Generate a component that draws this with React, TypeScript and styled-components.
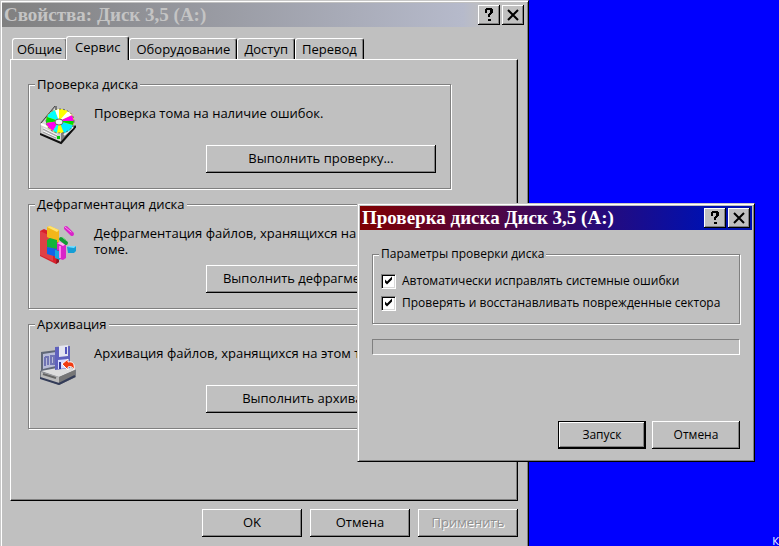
import React from 'react';
import styled, { createGlobalStyle, css } from 'styled-components';

const GlobalStyle = createGlobalStyle`
  * { box-sizing: border-box; }
  body { margin: 0; overflow: hidden; }
`;

const face = '#c0c0c0';
const raised = css`
  box-shadow: inset -1px -1px 0 #000, inset 1px 1px 0 #fff, inset -2px -2px 0 #808080;
`;

const Desktop = styled.main`
  position: relative;
  height: 100vh;
  overflow: hidden;
  background: #0000ff;
  color: #000;
  font-family: 'Open Sans', 'Noto Sans', sans-serif;
  font-size: 13px;
  line-height: 16px;
`;

const DesktopLabel = styled.span`
  position: absolute;
  right: 0;
  bottom: 0;
  font-size: 11px;
  line-height: 10px;
  white-space: nowrap;
  color: #fff;
`;

const Window = styled.section`
  position: absolute;
  display: flex;
  flex-direction: column;
  background: ${face};
  border: 1px solid;
  border-color: #c8c8c8 #000 #000 #c8c8c8;
  box-shadow: inset 1px 1px 0 #fff, inset -1px -1px 0 #808080;
`;

const PropertiesWindow = styled(Window)`
  left: 0;
  top: 0;
  width: 100%;
  max-width: 529px;
  padding: 2px 2px 12px 1px;
`;

const CheckWindow = styled(Window)`
  left: 357px;
  top: 203px;
  width: 100%;
  max-width: 398px;
  padding: 2px 2px 12px;
  font-size: 12px;
`;

const TitleBar = styled.header<{ $active?: boolean }>`
  display: flex;
  align-items: center;
  gap: 2px;
  height: 24px;
  padding: 0 2px;
  background: ${p => p.$active
    ? 'linear-gradient(90deg, #800000, #0010b0 88%)'
    : 'linear-gradient(90deg, #808080, #b6bacb 88%, #c0c0c0 92%)'};
  color: ${p => (p.$active ? '#fff' : '#c4c4c4')};
`;

const Title = styled.h1`
  flex: 1;
  margin: 0;
  font: bold 19px/24px 'Liberation Serif', serif;
  white-space: nowrap;
`;

const CaptionButton = styled.button`
  display: grid;
  place-items: center;
  width: 22px;
  height: 20px;
  padding: 0;
  border: 0;
  background: ${face};
  ${raised}
`;

const Tabs = styled.nav`
  display: flex;
  align-items: flex-end;
  height: 32px;
  padding-left: 10px;
`;

const Tab = styled.button<{ $selected?: boolean }>`
  position: relative;
  height: ${p => (p.$selected ? '24px' : '21px')};
  margin: ${p => (p.$selected ? '0 0 -1px -1px' : '0')};
  padding: ${p => (p.$selected ? '0 8px 3px' : '0 6px')};
  z-index: ${p => (p.$selected ? 1 : 0)};
  border: 1px solid #fff;
  border-bottom: 0;
  border-right-color: #000;
  border-radius: 3px 3px 0 0;
  box-shadow: inset -1px 0 0 #808080;
  background: ${face};
  font: inherit;
  color: inherit;
  &:first-child { padding: 0 4px; }
`;

const Page = styled.div`
  display: flex;
  flex-direction: column;
  gap: 7px;
  margin: 0 8px;
  padding: 16px 66px 71px 17px;
  border: 1px solid;
  border-color: #fff #000 #000 #fff;
  box-shadow: inset -1px -1px 0 #808080;
`;

const Group = styled.fieldset`
  min-width: 0;
  margin: 0;
  padding: 0;
  border: 1px solid #808080;
  box-shadow: 1px 1px 0 #fff, inset 1px 1px 0 #fff;
`;

const Legend = styled.legend`
  margin-left: 6px;
  padding: 0 2px;
  background: ${face};
`;

const Service = styled.div`
  display: grid;
  grid-template-columns: 36px 1fr;
  column-gap: 18px;
  min-height: 96px;
  padding: 13px 14px 15px 11px;
`;

const ServiceBody = styled.div`
  display: flex;
  flex-direction: column;
  justify-content: space-between;
`;

const Description = styled.p`
  margin: 0;
  max-width: 300px;
`;

const PushButton = styled.button<{ $default?: boolean }>`
  height: 28px;
  padding: 0;
  border: 0;
  background: ${face};
  font: inherit;
  color: inherit;
  white-space: nowrap;
  ${raised}
  ${p => p.$default && css`
    box-shadow: inset 0 0 0 1px #000, inset -2px -2px 0 #000, inset 2px 2px 0 #fff, inset -3px -3px 0 #808080;
  `}
  &:disabled {
    color: #909090;
    text-shadow: 1px 1px 0 #fff;
  }
`;

const ServiceButton = styled(PushButton)`
  align-self: flex-end;
  width: 230px;
  padding-bottom: 2px;
`;

const Footer = styled.footer<{ $compact?: boolean }>`
  display: flex;
  justify-content: flex-end;
  gap: ${p => (p.$compact ? '6px' : '8px')};
  padding: ${p => (p.$compact ? '66px 12px 0' : '8px 8px 0')};
  ${PushButton} {
    width: ${p => (p.$compact ? '88px' : '100px')};
    padding-bottom: ${p => (p.$compact ? '0' : '2px')};
  }
`;

const CheckBody = styled.form`
  display: flex;
  flex-direction: column;
  gap: 15px;
  padding: 16px 12px 0;
`;

const Options = styled.div`
  display: flex;
  flex-direction: column;
  gap: 6px;
  padding: 11px 8px 12px;
`;

const Option = styled.label`
  display: flex;
  align-items: center;
  gap: 6px;
  white-space: nowrap;
`;

const Checkbox = styled.input`
  appearance: none;
  flex: none;
  width: 15px;
  height: 15px;
  margin: 0;
  border: 1px solid;
  border-color: #808080 #fff #fff #808080;
  box-shadow: inset 1px 1px 0 #000, inset -1px -1px 0 #d8d8d8;
  background: #fff;
  &:checked::before {
    content: '';
    display: block;
    width: 13px;
    height: 13px;
    background: #000;
    clip-path: polygon(3px 5px, 5px 7px, 10px 2px, 10px 5px, 5px 10px, 3px 8px);
  }
`;

const Progress = styled.div`
  height: 16px;
  border: 1px solid;
  border-color: #808080 #fff #fff #808080;
`;

const Caption = ({ children, active }: { children: string; active?: boolean }) => (
  <TitleBar $active={active}>
    <Title>{children}</Title>
    <CaptionButton type="button" aria-label="Справка">
      <svg width="12" height="14" viewBox="0 0 12 14" shapeRendering="crispEdges">
        <path d="M2 1h1V0h6v1h1v4H9v1H8v1H7v2H5V6h1V5h1V2H4v3H2zM5 11h3v2H5z" />
      </svg>
    </CaptionButton>
    <CaptionButton type="button" aria-label="Закрыть">
      <svg width="12" height="12" viewBox="0 0 12 12">
        <path d="M1 1l10 10M11 1L1 11" stroke="#000" strokeWidth="2" />
      </svg>
    </CaptionButton>
  </TitleBar>
);

const DiscIcon = () => (
  <svg width="36" height="40" viewBox="0 0 36 40" aria-hidden="true">
    <path d="M0 18L15 1h2v14l19 7-14 17-22-10z" fill="#a8a8a8" />
    <path d="M2 18L15 3v12L6 24z" fill="#dcdcdc" />
    <path d="M1 18L15 1M16 1v8" fill="none" stroke="#444" />
    <path d="M1 18l20 9v11L1 29z" fill="#d2d2d2" />
    <path d="M1 19l20 9" stroke="#fff" strokeWidth="2" />
    <path d="M21 28l14-8v4L21 38z" fill="#808080" />
    <path d="M3 23l14 7M3 26l13 6" stroke="#fff" />
    <path d="M3 24l14 7M3 27l13 6" stroke="#999" />
    <path d="M0 29l21 9 15-17" fill="none" stroke="#111" strokeWidth="2" />
    <path d="M24 30l9-8" stroke="#eee" strokeWidth="2" />
    <rect x="17" y="31" width="3" height="3" fill="#0c0" />
    <ellipse cx="20" cy="16" rx="14" ry="12" fill="#ff0" />
    <path d="M19 16L7 12c2-4 5-6 8-7z" fill="#0ff" />
    <path d="M19 16L7 12c-1 2-1 4-1 6z" fill="#0d0" />
    <path d="M19 16L6 18c1 3 4 6 7 8z" fill="#f0e" />
    <path d="M19 16l-6 10 4 2z" fill="#0ff" />
    <path d="M19 16l5 12c5-1 8-4 9-8z" fill="#0ef" />
    <path d="M19 16l14 4 1-4z" fill="#0d0" />
    <path d="M19 16h15l-2-6z" fill="#f0e" />
    <path d="M19 16l13-6-4-4z" fill="#fff" />
    <path d="M19 16L15 5l4-1z" fill="#fff" />
    <ellipse cx="19" cy="17" rx="4" ry="3" fill="#eee" stroke="#666" />
    <ellipse cx="20" cy="16" rx="14" ry="12" fill="none" stroke="#666" strokeDasharray="2 2" />
  </svg>
);

const DefragIcon = () => (
  <svg width="36" height="40" viewBox="0 0 36 40" aria-hidden="true">
    <path d="M0 6l4-2 15 7v26l-3 2L0 31z" fill="#d8202b" />
    <path d="M0 6l13 6v24L0 30z" fill="#e04045" />
    <path d="M16 39l3-2V14z" fill="#8f1520" />
    <path d="M7 2l3-1 9 4v13L7 12z" fill="#f3b61a" />
    <path d="M7 2l3-1 9 4-2 2z" fill="#ffe36b" />
    <path d="M7 15l3-2 7 2v9l-10-2z" fill="#13b43a" />
    <path d="M7 22l10 2v8l-10-3z" fill="#1265e8" />
    <path d="M15 25l5 1v9l-5-2z" fill="#16a8df" />
    <path d="M17 18l3-1 6 2v14l-3 2-3-1v-8l-3-1z" fill="#d924c8" />
    <path d="M17 18l3-1 6 2-3 2z" fill="#ffb5f5" />
    <path d="M20 21v12" stroke="#ff80ec" strokeWidth="2" />
    <path d="M26 3l6 6" stroke="#d924c8" strokeWidth="4" strokeLinecap="round" />
    <path d="M25 2l6 5" stroke="#ff90f0" strokeLinecap="round" />
    <path d="M21 14l5 4" stroke="#139a36" strokeWidth="4" strokeLinecap="round" />
    <path d="M22 12l4 3" stroke="#60e070" />
    <path d="M27 22l2-1h7v5l-2 2h-6z" fill="#149ed5" />
    <path d="M27 22l2-1h7l-2 2z" fill="#73dcff" />
  </svg>
);

const BackupIcon = () => (
  <svg width="36" height="40" viewBox="0 0 36 40" aria-hidden="true">
    <path d="M0 26l10-5h20l6 4v7L19 40 0 33z" fill="#777b83" />
    <path d="M1 26l10-5h18l6 4-16 7z" fill="#ddd" />
    <path d="M1 27l18 5v7L1 33z" fill="#bbb" />
    <path d="M19 32l16-7v6l-16 8z" fill="#777" />
    <path d="M0 33l19 6 16-8" fill="none" stroke="#333c58" strokeWidth="2" />
    <path d="M3 29l13 4" stroke="#666" strokeWidth="2" />
    <path d="M1 7l16-2v18L1 26z" fill="#606878" />
    <path d="M3 9l13-2v14L3 24z" fill="#b8bcd8" />
    <path d="M5 12v9M5 12h3v8M11 11v8h3v-8z" fill="none" stroke="#7074b4" strokeWidth="2" />
    <path d="M15 2l15-1v22l-15 2z" fill="#5f61bd" />
    <path d="M19 1l9-1v11l-9 1z" fill="#e4e5f0" />
    <path d="M25 2h2v7h-2z" fill="#5557bd" />
    <path d="M18 15l10-1v9l-10 1z" fill="#d8dcff" />
    <path d="M20 17v7" stroke="#333a99" strokeWidth="2" />
    <path d="M22 19l6-5v3c5-1 7 2 6 8-1-3-3-4-6-3v3z" fill="#f13b12" stroke="#fff" />
  </svg>
);

const services = [
  { title: 'Проверка диска', text: 'Проверка тома на наличие ошибок.', action: 'Выполнить проверку...', Icon: DiscIcon },
  { title: 'Дефрагментация диска', text: 'Дефрагментация файлов, хранящихся на этом томе.', action: 'Выполнить дефрагментацию...', Icon: DefragIcon },
  { title: 'Архивация', text: 'Архивация файлов, хранящихся на этом томе.', action: 'Выполнить архивацию...', Icon: BackupIcon },
];

const tabs = ['Общие', 'Сервис', 'Оборудование', 'Доступ', 'Перевод'];
const options = ['Автоматически исправлять системные ошибки', 'Проверять и восстанавливать поврежденные сектора'];

export default function App() {
  return (
    <Desktop>
      <GlobalStyle />
      <DesktopLabel>К</DesktopLabel>
      <PropertiesWindow>
        <Caption>Свойства: Диск 3,5 (A:)</Caption>
        <Tabs role="tablist">
          {tabs.map((name, i) => (
            <Tab key={name} type="button" role="tab" aria-selected={i === 1} $selected={i === 1}>{name}</Tab>
          ))}
        </Tabs>
        <Page role="tabpanel">
          {services.map(({ title, text, action, Icon }) => (
            <Group key={title}>
              <Legend>{title}</Legend>
              <Service>
                <Icon />
                <ServiceBody>
                  <Description>{text}</Description>
                  <ServiceButton type="button">{action}</ServiceButton>
                </ServiceBody>
              </Service>
            </Group>
          ))}
        </Page>
        <Footer>
          <PushButton type="button">OK</PushButton>
          <PushButton type="button">Отмена</PushButton>
          <PushButton type="button" disabled>Применить</PushButton>
        </Footer>
      </PropertiesWindow>
      <CheckWindow role="dialog">
        <Caption active>Проверка диска Диск 3,5 (A:)</Caption>
        <CheckBody>
          <Group>
            <Legend>Параметры проверки диска</Legend>
            <Options>
              {options.map(text => (
                <Option key={text}>
                  <Checkbox type="checkbox" defaultChecked />
                  {text}
                </Option>
              ))}
            </Options>
          </Group>
          <Progress role="progressbar" aria-label="Проверка диска" />
        </CheckBody>
        <Footer $compact>
          <PushButton type="button" $default>Запуск</PushButton>
          <PushButton type="button">Отмена</PushButton>
        </Footer>
      </CheckWindow>
    </Desktop>
  );
}
